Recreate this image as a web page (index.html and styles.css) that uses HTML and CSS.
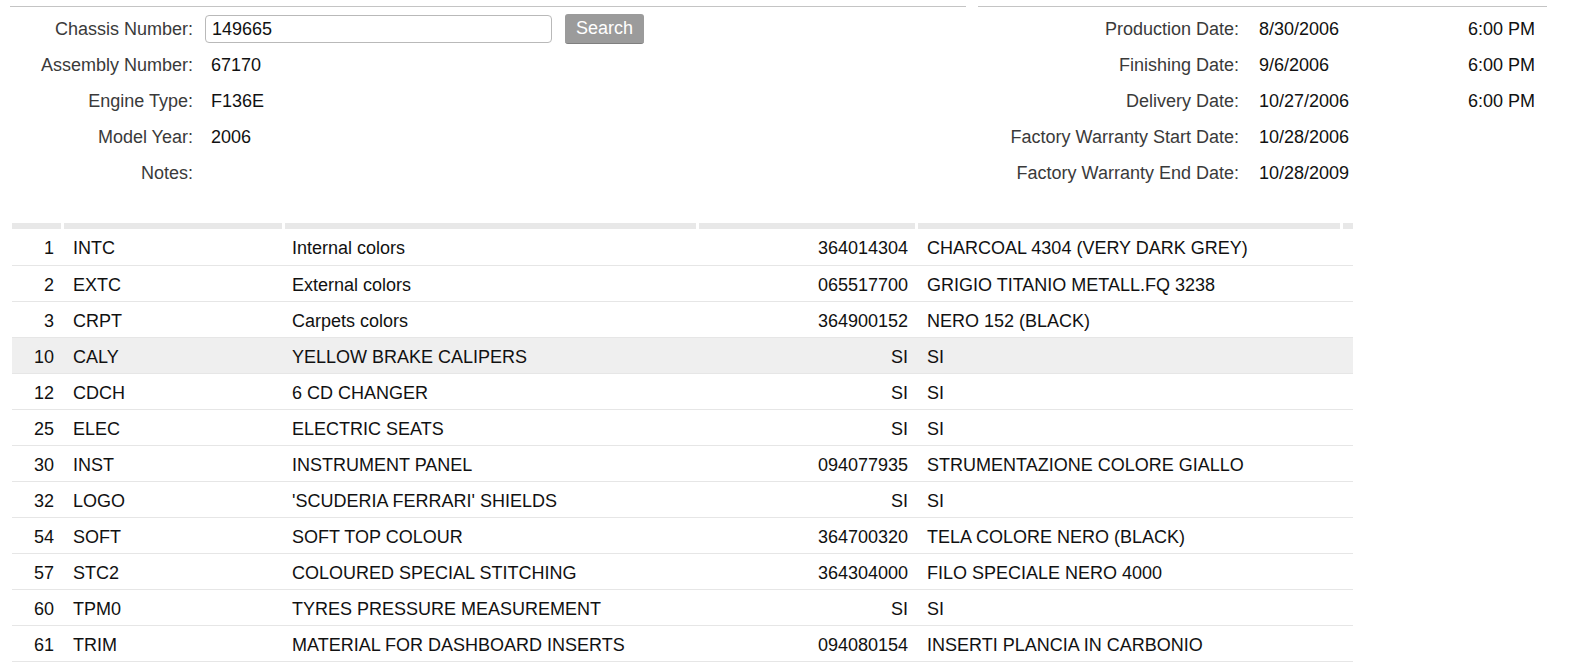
FILE: index.html
```html
<!DOCTYPE html>
<html>
<head>
<meta charset="utf-8">
<link rel="stylesheet" href="styles.css">
</head>
<body>
<div class="top">
  <div class="panel panel-left">
    <div class="lbl">Chassis Number:</div>
    <div class="val search"><input class="chassis" type="text" value="149665"><button class="btn">Search</button></div>
    <div class="lbl">Assembly Number:</div>
    <div class="val">67170</div>
    <div class="lbl">Engine Type:</div>
    <div class="val">F136E</div>
    <div class="lbl">Model Year:</div>
    <div class="val">2006</div>
    <div class="lbl">Notes:</div>
    <div class="val"></div>
  </div>
  <div class="panel panel-right">
    <div class="lbl">Production Date:</div><div class="val">8/30/2006</div><div class="time">6:00 PM</div>
    <div class="lbl">Finishing Date:</div><div class="val">9/6/2006</div><div class="time">6:00 PM</div>
    <div class="lbl">Delivery Date:</div><div class="val">10/27/2006</div><div class="time">6:00 PM</div>
    <div class="lbl">Factory Warranty Start Date:</div><div class="val">10/28/2006</div><div class="time"></div>
    <div class="lbl">Factory Warranty End Date:</div><div class="val">10/28/2009</div><div class="time"></div>
  </div>
</div>
<table class="opts">
  <colgroup>
    <col class="c1"><col class="c2"><col class="c3"><col class="c4"><col class="c5"><col class="c6">
  </colgroup>
  <thead>
    <tr><th></th><th></th><th></th><th></th><th></th><th></th></tr>
  </thead>
  <tbody>
    <tr><td class="num">1</td><td class="code">INTC</td><td class="desc">Internal colors</td><td class="part">364014304</td><td class="value">CHARCOAL 4304 (VERY DARK GREY)</td><td></td></tr>
    <tr><td class="num">2</td><td class="code">EXTC</td><td class="desc">External colors</td><td class="part">065517700</td><td class="value">GRIGIO TITANIO METALL.FQ 3238</td><td></td></tr>
    <tr><td class="num">3</td><td class="code">CRPT</td><td class="desc">Carpets colors</td><td class="part">364900152</td><td class="value">NERO 152 (BLACK)</td><td></td></tr>
    <tr class="hl"><td class="num">10</td><td class="code">CALY</td><td class="desc">YELLOW BRAKE CALIPERS</td><td class="part">SI</td><td class="value">SI</td><td></td></tr>
    <tr><td class="num">12</td><td class="code">CDCH</td><td class="desc">6 CD CHANGER</td><td class="part">SI</td><td class="value">SI</td><td></td></tr>
    <tr><td class="num">25</td><td class="code">ELEC</td><td class="desc">ELECTRIC SEATS</td><td class="part">SI</td><td class="value">SI</td><td></td></tr>
    <tr><td class="num">30</td><td class="code">INST</td><td class="desc">INSTRUMENT PANEL</td><td class="part">094077935</td><td class="value">STRUMENTAZIONE COLORE GIALLO</td><td></td></tr>
    <tr><td class="num">32</td><td class="code">LOGO</td><td class="desc">'SCUDERIA FERRARI' SHIELDS</td><td class="part">SI</td><td class="value">SI</td><td></td></tr>
    <tr><td class="num">54</td><td class="code">SOFT</td><td class="desc">SOFT TOP COLOUR</td><td class="part">364700320</td><td class="value">TELA COLORE NERO (BLACK)</td><td></td></tr>
    <tr><td class="num">57</td><td class="code">STC2</td><td class="desc">COLOURED SPECIAL STITCHING</td><td class="part">364304000</td><td class="value">FILO SPECIALE NERO 4000</td><td></td></tr>
    <tr><td class="num">60</td><td class="code">TPM0</td><td class="desc">TYRES PRESSURE MEASUREMENT</td><td class="part">SI</td><td class="value">SI</td><td></td></tr>
    <tr><td class="num">61</td><td class="code">TRIM</td><td class="desc">MATERIAL FOR DASHBOARD INSERTS</td><td class="part">094080154</td><td class="value">INSERTI PLANCIA IN CARBONIO</td><td></td></tr>
  </tbody>
</table>
</body>
</html>
```
FILE: styles.css
```css
html, body {
  margin: 0;
  padding: 0;
  background: #fff;
}
body {
  font-family: "Liberation Sans", Arial, Helvetica, sans-serif;
  font-size: 18px;
  color: #111;
}
.top {
  display: flex;
  gap: 12px;
  padding: 6px 0 0 10px;
}
.panel {
  border-top: 1px solid #c4c4c4;
  padding-top: 4px;
  display: grid;
  grid-auto-rows: 36px;
  align-items: center;
}
.panel-left {
  width: 956px;
  grid-template-columns: 183px 1fr;
}
.panel-right {
  width: 569px;
  grid-template-columns: 261px 229px 1fr;
}
.lbl {
  text-align: right;
  color: #3a3a3a;
  white-space: nowrap;
}
.val {
  padding-left: 18px;
  white-space: nowrap;
}
.panel-right .val {
  padding-left: 20px;
}
.time {
  white-space: nowrap;
}
.search {
  display: flex;
  align-items: center;
  padding-left: 12px;
}
.chassis {
  width: 347px;
  height: 28px;
  box-sizing: border-box;
  border: 1px solid #b9b9b9;
  border-radius: 4px;
  padding: 0 6px;
  font-family: inherit;
  font-size: 18px;
  color: #111;
  outline: none;
}
.btn {
  margin-left: 13px;
  width: 79px;
  height: 30px;
  border: none;
  border-bottom: 1px solid #7f7f7f;
  border-radius: 3px;
  background: #9b9b9b;
  color: #fff;
  font-family: inherit;
  font-size: 18px;
  padding: 0;
}
.opts {
  margin: 32px 0 0 12px;
  width: 1341px;
  table-layout: fixed;
  border-collapse: collapse;
}
.c1 { width: 50px; }
.c2 { width: 221px; }
.c3 { width: 414px; }
.c4 { width: 219px; }
.c5 { width: 425px; }
.c6 { width: 12px; }
.opts th {
  height: 6px;
  padding: 0;
  background: #e8e8e8;
  border-left: 3px solid #fff;
}
.opts th:first-child {
  border-left: none;
}
.opts td {
  height: 36px;
  padding: 4px 0 0 0;
  border-bottom: 1px solid #e6e6e6;
  white-space: nowrap;
  overflow: hidden;
  box-sizing: border-box;
}
.opts tr.hl td {
  background: #efefef;
}
.num { text-align: right; padding-right: 8px !important; }
.code { padding-left: 11px !important; }
.desc { padding-left: 9px !important; }
.part { text-align: right; padding-right: 8px !important; }
.value { padding-left: 11px !important; }
```
